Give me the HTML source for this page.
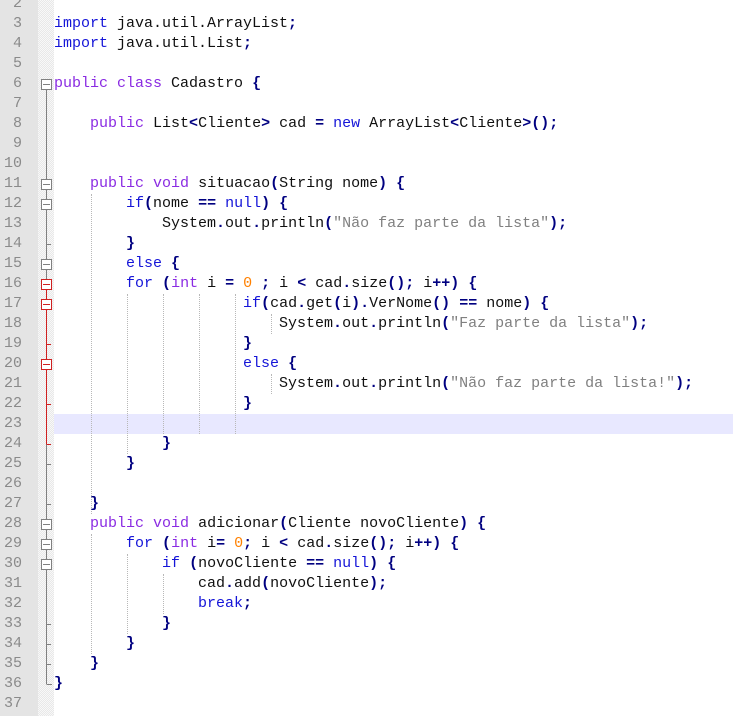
<!DOCTYPE html>
<html><head><meta charset="utf-8"><style>
body{margin:0;width:733px;height:716px;overflow:hidden;background:#fff;position:relative;font-family:"Liberation Mono","Courier New",monospace;font-size:15px}
#num{position:absolute;left:0;top:0;width:38px;height:716px;background:#e4e4e4}
#fold{position:absolute;left:38px;top:0;width:16px;height:716px;background:#f3f3f3;background-image:repeating-conic-gradient(#e8e8e8 0 25%,#f8f8f8 0 50%);background-size:2px 2px}
.n{position:absolute;left:0;width:22px;text-align:right;color:#8a8a8a;height:20px;line-height:20px;font-size:15px}
.l{position:absolute;left:54px;height:20px;line-height:20px;white-space:pre;color:#101010}
.g{position:absolute;width:0;height:20px;border-left:1px dotted #b8b8b8}
.k{color:#1515d8}
.t{color:#8a2be2}
.o{color:#000080;font-weight:bold}
.s{color:#808080}
.d{color:#ff8000}
#hl{position:absolute;left:54px;top:414px;width:679px;height:20px;background:#e8e8ff}
</style></head><body>
<div id="num"></div><div id="fold"></div><div id="hl"></div>
<div class="n" style="top:-6px">2</div><div class="n" style="top:14px">3</div><div class="n" style="top:34px">4</div><div class="n" style="top:54px">5</div><div class="n" style="top:74px">6</div><div class="n" style="top:94px">7</div><div class="n" style="top:114px">8</div><div class="n" style="top:134px">9</div><div class="n" style="top:154px">10</div><div class="n" style="top:174px">11</div><div class="n" style="top:194px">12</div><div class="n" style="top:214px">13</div><div class="n" style="top:234px">14</div><div class="n" style="top:254px">15</div><div class="n" style="top:274px">16</div><div class="n" style="top:294px">17</div><div class="n" style="top:314px">18</div><div class="n" style="top:334px">19</div><div class="n" style="top:354px">20</div><div class="n" style="top:374px">21</div><div class="n" style="top:394px">22</div><div class="n" style="top:414px">23</div><div class="n" style="top:434px">24</div><div class="n" style="top:454px">25</div><div class="n" style="top:474px">26</div><div class="n" style="top:494px">27</div><div class="n" style="top:514px">28</div><div class="n" style="top:534px">29</div><div class="n" style="top:554px">30</div><div class="n" style="top:574px">31</div><div class="n" style="top:594px">32</div><div class="n" style="top:614px">33</div><div class="n" style="top:634px">34</div><div class="n" style="top:654px">35</div><div class="n" style="top:674px">36</div><div class="n" style="top:694px">37</div>

<svg style="position:absolute;left:0;top:0" width="60" height="716">
<g fill="none" stroke="#808080" stroke-width="1">
<line x1="46.5" y1="89" x2="46.5" y2="684"/>
<line x1="46.5" y1="684.5" x2="52" y2="684.5"/>
<line x1="46.5" y1="244.5" x2="51" y2="244.5"/>
<line x1="46.5" y1="464.5" x2="51" y2="464.5"/>
<line x1="46.5" y1="504.5" x2="51" y2="504.5"/>
<line x1="46.5" y1="624.5" x2="51" y2="624.5"/>
<line x1="46.5" y1="644.5" x2="51" y2="644.5"/>
<line x1="46.5" y1="664.5" x2="51" y2="664.5"/>
</g>
<g stroke="#d02020" fill="none">
<line x1="46.5" y1="289" x2="46.5" y2="444"/>
<line x1="46.5" y1="344.5" x2="51" y2="344.5"/>
<line x1="46.5" y1="404.5" x2="51" y2="404.5"/>
<line x1="46.5" y1="444.5" x2="51" y2="444.5"/>
</g>
<g fill="#fff" stroke="#808080">
<rect x="41.5" y="79.5" width="10" height="10"/><line x1="43" y1="84.5" x2="50" y2="84.5"/>
<rect x="41.5" y="179.5" width="10" height="10"/><line x1="43" y1="184.5" x2="50" y2="184.5"/>
<rect x="41.5" y="199.5" width="10" height="10"/><line x1="43" y1="204.5" x2="50" y2="204.5"/>
<rect x="41.5" y="259.5" width="10" height="10"/><line x1="43" y1="264.5" x2="50" y2="264.5"/>
<rect x="41.5" y="519.5" width="10" height="10"/><line x1="43" y1="524.5" x2="50" y2="524.5"/>
<rect x="41.5" y="539.5" width="10" height="10"/><line x1="43" y1="544.5" x2="50" y2="544.5"/>
<rect x="41.5" y="559.5" width="10" height="10"/><line x1="43" y1="564.5" x2="50" y2="564.5"/>
</g>
<g fill="#fff" stroke="#d02020">
<rect x="41.5" y="279.5" width="10" height="10"/><line x1="43" y1="284.5" x2="50" y2="284.5"/>
<rect x="41.5" y="299.5" width="10" height="10"/><line x1="43" y1="304.5" x2="50" y2="304.5"/>
<rect x="41.5" y="359.5" width="10" height="10"/><line x1="43" y1="364.5" x2="50" y2="364.5"/>
</g>
</svg>

<div class="g" style="left:91px;top:194px;height:320px"></div>
<div class="g" style="left:91px;top:534px;height:120px"></div>
<div class="g" style="left:127px;top:294px;height:160px"></div>
<div class="g" style="left:127px;top:554px;height:80px"></div>
<div class="g" style="left:163px;top:294px;height:140px"></div>
<div class="g" style="left:163px;top:574px;height:40px"></div>
<div class="g" style="left:199px;top:294px;height:140px"></div>
<div class="g" style="left:235px;top:294px;height:140px"></div>
<div class="g" style="left:271px;top:314px;height:20px"></div>
<div class="g" style="left:271px;top:374px;height:20px"></div>

<div class="l" style="top:14px"><span class="k">import</span> java.util.ArrayList<span class="o">;</span></div>
<div class="l" style="top:34px"><span class="k">import</span> java.util.List<span class="o">;</span></div>
<div class="l" style="top:74px"><span class="t">public</span> <span class="t">class</span> Cadastro <span class="o">{</span></div>
<div class="l" style="top:114px">    <span class="t">public</span> List<span class="o">&lt;</span>Cliente<span class="o">&gt;</span> cad <span class="o">=</span> <span class="k">new</span> ArrayList<span class="o">&lt;</span>Cliente<span class="o">&gt;();</span></div>
<div class="l" style="top:174px">    <span class="t">public</span> <span class="t">void</span> situacao<span class="o">(</span>String nome<span class="o">)</span> <span class="o">{</span></div>
<div class="l" style="top:194px">        <span class="k">if</span><span class="o">(</span>nome <span class="o">==</span> <span class="k">null</span><span class="o">)</span> <span class="o">{</span></div>
<div class="l" style="top:214px">            System<span class="o">.</span>out<span class="o">.</span>println<span class="o">(</span><span class="s">"Não faz parte da lista"</span><span class="o">);</span></div>
<div class="l" style="top:234px">        <span class="o">}</span></div>
<div class="l" style="top:254px">        <span class="k">else</span> <span class="o">{</span></div>
<div class="l" style="top:274px">        <span class="k">for</span> <span class="o">(</span><span class="t">int</span> i <span class="o">=</span> <span class="d">0</span> <span class="o">;</span> i <span class="o">&lt;</span> cad<span class="o">.</span>size<span class="o">();</span> i<span class="o">++)</span> <span class="o">{</span></div>
<div class="l" style="top:294px">                     <span class="k">if</span><span class="o">(</span>cad<span class="o">.</span>get<span class="o">(</span>i<span class="o">).</span>VerNome<span class="o">()</span> <span class="o">==</span> nome<span class="o">)</span> <span class="o">{</span></div>
<div class="l" style="top:314px">                         System<span class="o">.</span>out<span class="o">.</span>println<span class="o">(</span><span class="s">"Faz parte da lista"</span><span class="o">);</span></div>
<div class="l" style="top:334px">                     <span class="o">}</span></div>
<div class="l" style="top:354px">                     <span class="k">else</span> <span class="o">{</span></div>
<div class="l" style="top:374px">                         System<span class="o">.</span>out<span class="o">.</span>println<span class="o">(</span><span class="s">"Não faz parte da lista!"</span><span class="o">);</span></div>
<div class="l" style="top:394px">                     <span class="o">}</span></div>
<div class="l" style="top:434px">            <span class="o">}</span></div>
<div class="l" style="top:454px">        <span class="o">}</span></div>
<div class="l" style="top:494px">    <span class="o">}</span></div>
<div class="l" style="top:514px">    <span class="t">public</span> <span class="t">void</span> adicionar<span class="o">(</span>Cliente novoCliente<span class="o">)</span> <span class="o">{</span></div>
<div class="l" style="top:534px">        <span class="k">for</span> <span class="o">(</span><span class="t">int</span> i<span class="o">=</span> <span class="d">0</span><span class="o">;</span> i <span class="o">&lt;</span> cad<span class="o">.</span>size<span class="o">();</span> i<span class="o">++)</span> <span class="o">{</span></div>
<div class="l" style="top:554px">            <span class="k">if</span> <span class="o">(</span>novoCliente <span class="o">==</span> <span class="k">null</span><span class="o">)</span> <span class="o">{</span></div>
<div class="l" style="top:574px">                cad<span class="o">.</span>add<span class="o">(</span>novoCliente<span class="o">);</span></div>
<div class="l" style="top:594px">                <span class="k">break</span><span class="o">;</span></div>
<div class="l" style="top:614px">            <span class="o">}</span></div>
<div class="l" style="top:634px">        <span class="o">}</span></div>
<div class="l" style="top:654px">    <span class="o">}</span></div>
<div class="l" style="top:674px"><span class="o">}</span></div>
</body></html>
